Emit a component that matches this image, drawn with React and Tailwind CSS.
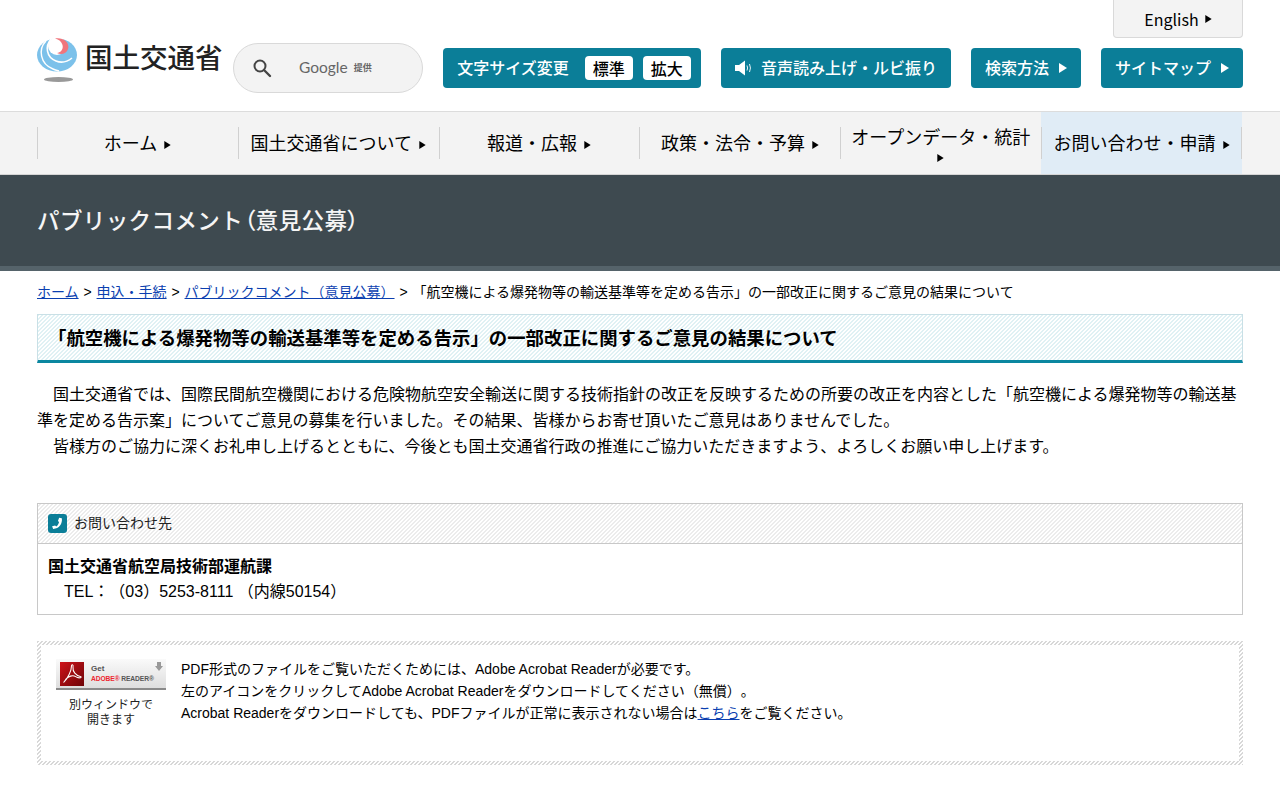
import React from 'react'

const TEAL = 'bg-[#0b7e98]'
const navItems = ['ホーム', '国土交通省について', '報道・広報', '政策・法令・予算', 'オープンデータ・統計', 'お問い合わせ・申請']

function Arrow({ className = '' }) {
  return (
    <svg viewBox="0 0 8 10" className={`inline-block ${className}`}>
      <path d="M0 0 L8 5 L0 10 Z" fill="currentColor" />
    </svg>
  )
}

function Logo() {
  return (
    <div className="flex items-start self-start -mt-[5px] w-[186px] shrink-0">
      <svg viewBox="0 0 40 44" className="w-[40px] h-[44px] shrink-0">
        <ellipse cx="20" cy="17" rx="20" ry="16.5" fill="#7cc1ea" />
        <circle cx="20" cy="8" r="9" fill="#fff" />
        <path d="M18 0.5 C27 -1 33 5 31 11 C29.5 16 24 17 20 15 C24 14.5 26.5 11 25.5 7 C24.5 3.5 22 1.5 18 0.5 Z" fill="#f0757c" />
        <path d="M14 1 C8 8 9 19 19 23 C24 25 30 24 35 20" stroke="#fff" strokeWidth="1.6" fill="none" />
        <path d="M9 3 C1 11 3 26 16 31 C18 32 20 32.5 22 33" stroke="#fff" strokeWidth="1.4" fill="none" />
        <ellipse cx="21.5" cy="41.5" rx="14.5" ry="2.4" fill="#999" />
      </svg>
      <span className="ml-[8px] -mt-[1px] text-[27.5px] leading-[38px] text-[#222] font-['Noto_Sans_CJK_JP',sans-serif] font-medium whitespace-nowrap">国土交通省</span>
    </div>
  )
}

function SearchBox() {
  return (
    <div className="ml-[10px] w-[190px] h-[50px] rounded-full border border-[#d9d9d9] bg-[#f3f3f3] flex items-center shrink-0">
      <svg viewBox="0 0 20 20" className="ml-[18px] w-[20px] h-[20px] text-[#444]" fill="none" stroke="currentColor">
        <circle cx="8" cy="8" r="5.5" strokeWidth="2" />
        <path d="M12 12 L18 18" strokeWidth="2.4" strokeLinecap="round" />
      </svg>
      <span className="ml-[27px] -mt-[1px] text-[15.5px] text-[#666] font-['Lato',sans-serif]">Google</span>
      <span className="ml-[6px] text-[9px] font-bold text-[#666] font-['Noto_Sans_CJK_JP',sans-serif]">提供</span>
    </div>
  )
}

function HeadBtn({ w, children }) {
  return (
    <div className={`${w} ${TEAL} h-[40px] rounded-[4px] flex items-center justify-center text-white text-[16px] font-medium whitespace-nowrap shrink-0`}>
      {children}
    </div>
  )
}

function Label({ children }) {
  return <span className="-translate-y-[1px]">{children}</span>
}

function Header() {
  return (
    <header className="h-[112px] border-b border-[#dcdcdc] px-[37px] font-['Noto_Sans_CJK_JP',sans-serif]">
      <div className="flex justify-end h-[38px]">
        <div className="w-[130px] h-[38px] bg-[#f3f3f3] border border-t-0 border-[#d9d9d9] rounded-b-[4px] flex items-center justify-center text-[16px] text-black">
          English<Arrow className="w-[7px] h-[8px] ml-[6px]" />
        </div>
      </div>
      <div className="flex items-center h-[50px] mt-[5px]">
        <Logo />
        <SearchBox />
        <div className="ml-[20px] flex gap-[20px]">
          <HeadBtn w="w-[258px] pl-[4px]">
            <Label>文字サイズ変更</Label>
            <span className="ml-[16px] w-[48px] h-[24px] bg-white rounded-[4px] text-black flex items-center justify-center">標準</span>
            <span className="ml-[10px] w-[48px] h-[24px] bg-white rounded-[4px] text-black flex items-center justify-center">拡大</span>
          </HeadBtn>
          <HeadBtn w="w-[230px]">
            <svg viewBox="0 0 17 16" className="w-[17px] h-[16px] mr-[9px]">
              <path d="M0 5 H4 L10 0.5 V15.5 L4 11 H0 Z" fill="#fff" />
              <path d="M12 5.5 Q13.2 8 12 10.5 M14.5 4 Q16.4 8 14.5 12" stroke="#fff" strokeWidth="0.9" fill="none" />
            </svg>
            <Label>音声読み上げ・ルビ振り</Label>
          </HeadBtn>
          <HeadBtn w="w-[110px]"><Label>検索方法</Label><Arrow className="w-[8px] h-[10px] ml-[10px]" /></HeadBtn>
          <HeadBtn w="w-[142px]"><Label>サイトマップ</Label><Arrow className="w-[8px] h-[10px] ml-[10px]" /></HeadBtn>
        </div>
      </div>
    </header>
  )
}

function Nav() {
  return (
    <nav className="h-[63px] bg-[#f3f3f3] border-b border-[#d5d5d5] px-[37px] font-['Noto_Sans_CJK_JP',sans-serif]">
      <ul className="flex h-[62px] w-[1205px] items-center">
        {navItems.map((label, i) => (
          <li key={label} className={`relative flex-1 h-full flex items-center justify-center ${i === 5 ? 'bg-[#e0ecf6]' : ''}`}>
            <span className="absolute left-0 top-[15px] h-[32px] w-px bg-[#d0d0d0]" />
            {i === 5 && <span className="absolute right-0 top-[15px] h-[32px] w-px bg-[#d0d0d0]" />}
            {i === 4 ? (
              <span className="pt-[6px] text-center text-[18px] leading-[19px] text-black whitespace-nowrap">
                {label}<br /><Arrow className="w-[7px] h-[8px] align-[1px]" />
              </span>
            ) : (
              <span className="pb-[2px] text-center text-[18px] leading-[20px] text-black whitespace-nowrap">
                {label}<Arrow className="w-[7px] h-[8px] ml-[7px] align-[1px]" />
              </span>
            )}
          </li>
        ))}
      </ul>
    </nav>
  )
}

function PageTitle() {
  return (
    <div className="h-[96px] bg-[#3e4a50] border-b-[5px] border-[#55636a] px-[37px] flex items-center font-['Noto_Sans_CJK_JP',sans-serif]">
      <p className="text-[22.5px] font-medium tracking-[0.4px] text-[#f5f5f5] pb-[2px]">
        パブリックコメント<span className="pl-[1px] [font-feature-settings:'palt']">（</span>意見公募<span className="pr-[1px] [font-feature-settings:'palt']">）</span>
      </p>
    </div>
  )
}

function Crumbs() {
  const link = 'text-[#0b3fb0] underline'
  const sep = 'mx-[1px]'
  return (
    <p className="mt-[11px] text-[14px] leading-[20px] text-black whitespace-nowrap">
      <a className={link}>ホーム</a> <span className={sep}>&gt;</span> <a className={link}>申込・手続</a> <span className={sep}>&gt;</span> <a className={link}>パブリックコメント（意見公募）</a> <span className={sep}>&gt;</span> 「航空機による爆発物等の輸送基準等を定める告示」の一部改正に関するご意見の結果について
    </p>
  )
}

function ContactBox() {
  return (
    <section className="mt-[43px] border border-[#c8c8c8]">
      <div className="h-[40px] border-b border-[#c8c8c8] pl-[10px] flex items-center bg-[repeating-linear-gradient(-45deg,#ececec_0,#ececec_1.414px,#ffffff_1.414px,#ffffff_2.828px)]">
        <span className={`w-[19px] h-[19px] rounded-[3px] ${TEAL} flex items-center justify-center`}>
          <svg viewBox="0 0 12 12" className="w-[13px] h-[13px]">
            <path d="M7.5 0.8 L10 1.2 C10.8 6 7.5 11 2 11 L1 8.6 L3.8 7.8 L4.8 8.8 C6.2 8 7.2 6.2 7.4 4.6 L6.4 3.6 Z" fill="#fff" />
          </svg>
        </span>
        <span className="ml-[7px] text-[14px] text-[#222]">お問い合わせ先</span>
      </div>
      <div className="h-[70px] px-[10px] pt-[10px] text-[16px] leading-[25px] text-black">
        <p className="font-bold">国土交通省航空局技術部運航課</p>
        <p className="pl-[16px]">TEL：（03）5253-8111 （内線50154）</p>
      </div>
    </section>
  )
}

function AdobeBadge() {
  return (
    <div className="relative w-[110px] h-[31px] border-b-2 border-[#8a8a8a] bg-gradient-to-b from-[#fafafa] to-[#dedede] flex items-center pl-[4px] shrink-0">
      <span className="w-[24px] h-[24px] bg-gradient-to-br from-[#d0141b] to-[#6e0508] flex items-center justify-center shrink-0">
        <svg viewBox="0 0 20 20" className="w-[21px] h-[21px]" fill="none" stroke="#fff" strokeWidth="1">
          <path d="M2 18 C6 14 9 7 9 3 C9 1 11 1 10.5 4 C10 8 13 12 18 13 C19 14 16 15 13 13 C10 11 6 13 4 15 C3 17 1 19 2 18 Z" />
        </svg>
      </span>
      <span className="ml-[7px] text-[#555] font-['Liberation_Sans',sans-serif]">
        <span className="block text-[8px] leading-[10px] font-bold">Get</span>
        <span className="block text-[6.7px] leading-[9px] font-bold whitespace-nowrap tracking-[-0.1px]"><span className="text-[#ee2530]">ADOBE®</span> READER®</span>
      </span>
      <svg viewBox="0 0 8 9" className="absolute right-[3px] top-[3px] w-[8px] h-[9px]">
        <path d="M2 0 H6 V4 H8 L4 9 L0 4 H2 Z" fill="#999" />
      </svg>
    </div>
  )
}

function PdfBox() {
  return (
    <section className="mt-[26px] p-[4px] bg-[repeating-linear-gradient(-45deg,#d8d8d8_0,#d8d8d8_1.2px,#ffffff_1.2px,#ffffff_2.828px)]">
      <div className="h-[116px] bg-white flex pl-[15px] pt-[14px]">
        <div className="w-[110px] shrink-0">
          <AdobeBadge />
          <p className="mt-[8px] text-center text-[12px] leading-[15px] text-[#222]">別ウィンドウで<br />開きます</p>
        </div>
        <div className="ml-[15px] -mt-[1px] text-[14px] leading-[22px] text-black">
          <p>PDF形式のファイルをご覧いただくためには、Adobe Acrobat Readerが必要です。</p>
          <p>左のアイコンをクリックしてAdobe Acrobat Readerをダウンロードしてください（無償）。</p>
          <p>Acrobat Readerをダウンロードしても、PDFファイルが正常に表示されない場合は<a className="text-[#0b3fb0] underline">こちら</a>をご覧ください。</p>
        </div>
      </div>
    </section>
  )
}

export default function App() {
  return (
    <div lang="ja" className="min-h-[800px] bg-white font-['Liberation_Sans','Noto_Sans_CJK_JP',sans-serif] [text-spacing-trim:space-all]">
      <Header />
      <Nav />
      <PageTitle />
      <main className="px-[37px]">
        <Crumbs />
        <h1 className="mt-[12px] h-[49px] border border-[#c9e0e6] border-b-[3px] border-b-[#0b87a0] pl-[10px] pt-[3px] flex items-center text-[18.4px] font-bold text-black bg-[repeating-linear-gradient(-45deg,#e0f1f4_0,#e0f1f4_1.414px,#ffffff_1.414px,#ffffff_2.828px)]">
          「航空機による爆発物等の輸送基準等を定める告示」の一部改正に関するご意見の結果について
        </h1>
        <div className="mt-[19px] text-[16px] leading-[26px] text-black">
          <p className="indent-[16px]">国土交通省では、国際民間航空機関における危険物航空安全輸送に関する技術指針の改正を反映するための所要の改正を内容とした「航空機による爆発物等の輸送基準を定める告示案」についてご意見の募集を行いました。その結果、皆様からお寄せ頂いたご意見はありませんでした。</p>
          <p className="indent-[16px]">皆様方のご協力に深くお礼申し上げるとともに、今後とも国土交通省行政の推進にご協力いただきますよう、よろしくお願い申し上げます。</p>
        </div>
        <ContactBox />
        <PdfBox />
      </main>
    </div>
  )
}
